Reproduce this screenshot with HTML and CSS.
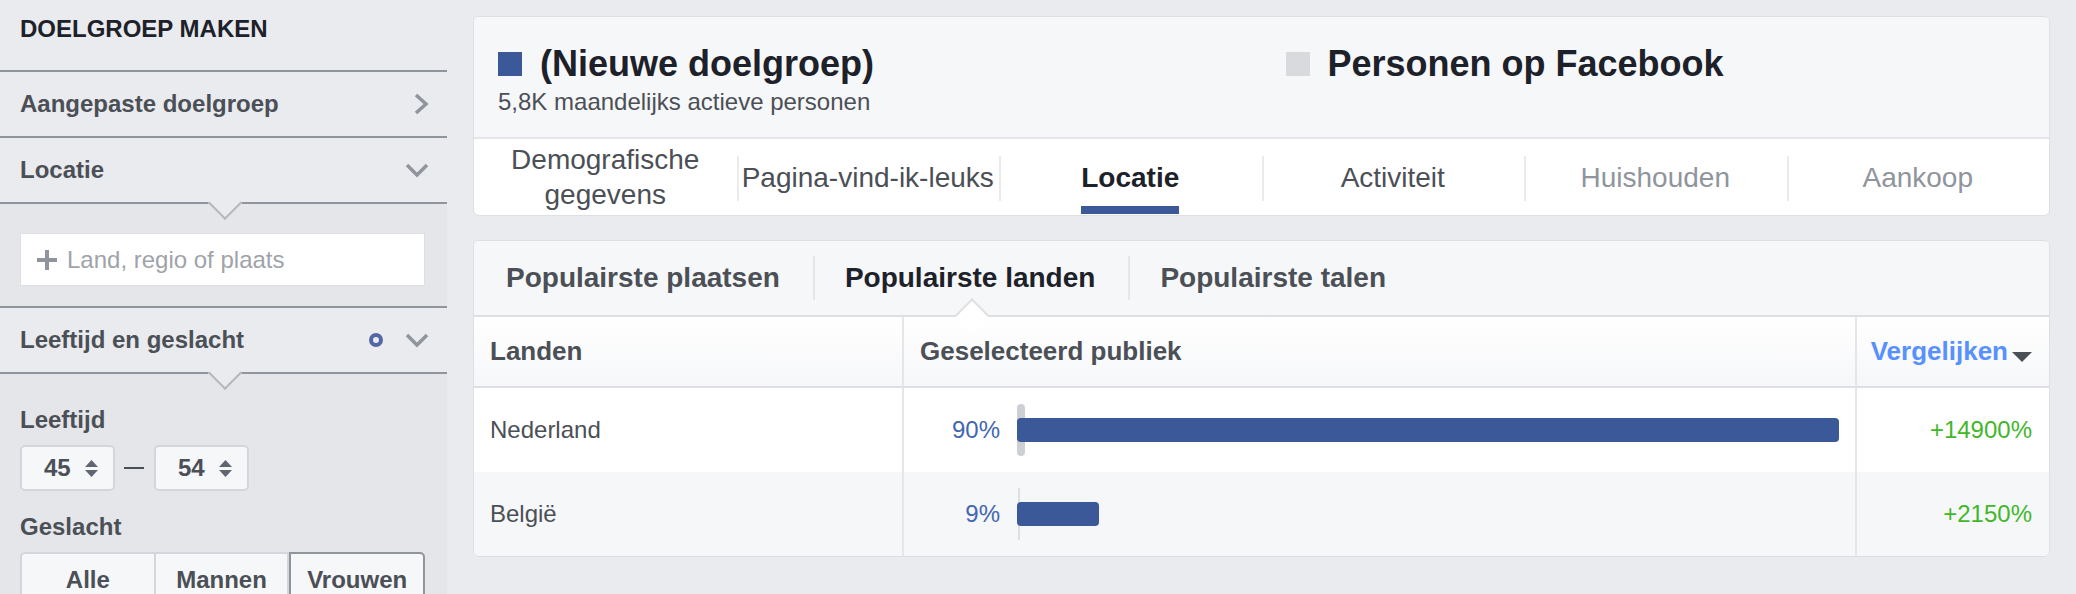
FILE: index.html
```html
<!DOCTYPE html>
<html lang="nl">
<head>
    <meta charset="UTF-8">
    <title>Doelgroepstatistieken - Locatie</title>
    <link rel="stylesheet" href="styles.css">
</head>
<body>
<div class="page">
    <!-- Sidebar: doelgroep maken -->
    <aside class="sidebar">
        <div class="side-title">DOELGROEP MAKEN</div>

        <div class="side-head">
            <span>Aangepaste doelgroep</span>
            <svg class="chev" width="15" height="22" viewBox="0 0 15 22"><polyline points="2,2 12,11 2,20" fill="none" stroke="#90949c" stroke-width="3.5"/></svg>
        </div>

        <div class="side-head open">
            <span>Locatie</span>
            <svg class="chev" width="24" height="15" viewBox="0 0 24 15"><polyline points="2,2 12,12 22,2" fill="none" stroke="#90949c" stroke-width="3.5"/></svg>
        </div>
        <div class="side-body">
            <div class="search">
                <svg width="20" height="20" viewBox="0 0 20 20"><rect x="8" y="0" width="4" height="20" fill="#90949c"/><rect x="0" y="8" width="20" height="4" fill="#90949c"/></svg>
                <span>Land, regio of plaats</span>
            </div>
        </div>

        <div class="side-head open">
            <span>Leeftijd en geslacht</span>
            <span class="head-icons">
                <span class="dot"></span>
                <svg class="chev" width="24" height="15" viewBox="0 0 24 15"><polyline points="2,2 12,12 22,2" fill="none" stroke="#90949c" stroke-width="3.5"/></svg>
            </span>
        </div>
        <div class="side-body age">
            <div class="field-label">Leeftijd</div>
            <div class="age-row">
                <div class="spin">
                    <span>45</span>
                    <svg width="13" height="17" viewBox="0 0 13 17"><polygon points="6.5,0 13,7 0,7" fill="#606770"/><polygon points="0,10 13,10 6.5,17" fill="#606770"/></svg>
                </div>
                <span class="dash"></span>
                <div class="spin">
                    <span>54</span>
                    <svg width="13" height="17" viewBox="0 0 13 17"><polygon points="6.5,0 13,7 0,7" fill="#606770"/><polygon points="0,10 13,10 6.5,17" fill="#606770"/></svg>
                </div>
            </div>
            <div class="field-label gap">Geslacht</div>
            <div class="seg">
                <div class="seg-item">Alle</div>
                <div class="seg-item">Mannen</div>
                <div class="seg-item selected">Vrouwen</div>
            </div>
        </div>
    </aside>

    <main class="main">
        <!-- Doelgroep samenvatting en tabs -->
        <section class="card">
            <div class="summary">
                <div class="aud">
                    <div class="aud-title"><span class="swatch"></span>(Nieuwe doelgroep)</div>
                    <div class="aud-sub">5,8K maandelijks actieve personen</div>
                </div>
                <div class="aud">
                    <div class="aud-title"><span class="swatch grey"></span>Personen op Facebook</div>
                </div>
            </div>
            <nav class="tabs">
                <div class="tab"><span>Demografische<br>gegevens</span></div>
                <div class="tab"><span>Pagina-vind-ik-leuks</span></div>
                <div class="tab active"><span>Locatie</span></div>
                <div class="tab"><span>Activiteit</span></div>
                <div class="tab muted"><span>Huishouden</span></div>
                <div class="tab muted"><span>Aankoop</span></div>
            </nav>
        </section>

        <!-- Locatie tabel -->
        <section class="card results">
            <div class="subtabs">
                <div class="subtab">Populairste plaatsen</div>
                <div class="subtab active">Populairste landen</div>
                <div class="subtab">Populairste talen</div>
            </div>
            <div class="grid">
                <div class="th">Landen</div>
                <div class="th col">Geselecteerd publiek</div>
                <div class="th col right compare">Vergelijken<span class="caret"></span></div>

                <div class="td">Nederland</div>
                <div class="td col bar-cell">
                    <span class="pct">90%</span>
                    <div class="track"><span class="axis wide"></span><span class="bar" style="width: 100%"></span></div>
                </div>
                <div class="td col right up">+14900%</div>

                <div class="td alt">België</div>
                <div class="td col bar-cell alt">
                    <span class="pct">9%</span>
                    <div class="track"><span class="axis"></span><span class="bar" style="width: 10%"></span></div>
                </div>
                <div class="td col right up alt">+2150%</div>
            </div>
        </section>
    </main>
</div>
</body>
</html>
```

FILE: styles.css
```css
/* General */
* {
    box-sizing: border-box;
}

body {
    margin: 0;
    background-color: #e9ebee;
    color: #4b4f56;
    font-family: "Liberation Sans", Arial, sans-serif;
    overflow: hidden;
}

.page {
    display: flex;
    height: 594px;
    overflow: hidden;
}

/* Sidebar */
.sidebar {
    width: 447px;
    flex: none;
    overflow: hidden;
}

.side-title {
    height: 72px;
    padding: 15px 20px 0;
    font-size: 24px;
    line-height: 28px;
    font-weight: bold;
    color: #1d2129;
    border-bottom: 2px solid #90949c;
}

.side-head {
    position: relative;
    height: 66px;
    display: flex;
    align-items: center;
    justify-content: space-between;
    padding: 0 18px 0 20px;
    font-size: 24px;
    font-weight: bold;
    border-bottom: 2px solid #90949c;
}

.side-head .chev {
    display: block;
}

/* little notch under an open section */
.side-head.open::after {
    content: "";
    position: absolute;
    left: 50%;
    bottom: -13px;
    width: 22px;
    height: 22px;
    margin-left: -11px;
    background-color: #e9ebee;
    border-right: 2px solid #b4b7bc;
    border-bottom: 2px solid #b4b7bc;
    transform: rotate(45deg);
}

.head-icons {
    display: flex;
    align-items: center;
    gap: 22px;
}

.dot {
    width: 14px;
    height: 14px;
    border: 4px solid #5466a4;
    border-radius: 50%;
}

.side-body {
    background-color: #e5e6e9;
    border-bottom: 2px solid #90949c;
    padding: 29px 22px 20px 20px;
}

.search {
    height: 53px;
    background-color: #ffffff;
    border: 1px solid #dddfe2;
    display: flex;
    align-items: center;
    gap: 10px;
    padding-left: 16px;
    font-size: 24px;
    color: #a0a3a9;
}

.side-body.age {
    padding-top: 32px;
    border-bottom: none;
}

.field-label {
    font-size: 24px;
    line-height: 28px;
    font-weight: bold;
}

.field-label.gap {
    margin-top: 22px;
}

.age-row {
    display: flex;
    align-items: center;
    margin-top: 11px;
}

.spin {
    width: 95px;
    height: 46px;
    display: flex;
    align-items: center;
    gap: 14px;
    padding-left: 22px;
    background-color: #f6f7f9;
    border: 2px solid #d3d6db;
    border-radius: 5px;
    font-size: 24px;
    font-weight: bold;
}

.dash {
    width: 20px;
    height: 2px;
    margin: 0 10px 0 9px;
    background-color: #4b4f56;
}

.seg {
    display: flex;
    margin-top: 11px;
}

.seg-item {
    flex: 1;
    height: 56px;
    display: flex;
    align-items: center;
    justify-content: center;
    font-size: 24px;
    font-weight: bold;
    background-color: #f6f7f9;
    border: 2px solid #d3d6db;
    border-left-width: 0;
}

.seg-item:first-child {
    border-left-width: 2px;
    border-radius: 5px 0 0 0;
}

.seg-item.selected {
    border: 2px solid #90949c;
    border-radius: 0 5px 0 0;
}

/* Main area */
.main {
    flex: 1;
    padding: 16px 26px 0;
}

.card {
    background-color: #ffffff;
    border: 1px solid #dddfe2;
    border-radius: 6px;
    overflow: hidden;
}

.summary {
    display: flex;
    height: 122px;
    background-color: #f6f7f9;
    border-bottom: 2px solid #e4e6ea;
}

.aud {
    flex: 1;
    padding: 25px 24px 0;
}

.aud-title {
    display: flex;
    align-items: center;
    gap: 18px;
    font-size: 36px;
    line-height: 44px;
    font-weight: bold;
    color: #1d2129;
}

.swatch {
    width: 24px;
    height: 24px;
    background-color: #3b5998;
}

.swatch.grey {
    background-color: #d8dade;
}

.aud-sub {
    margin-top: 2px;
    font-size: 24px;
    line-height: 28px;
}

.tabs {
    display: flex;
    height: 76px;
}

.tab {
    flex: 1;
    position: relative;
    display: flex;
    align-items: center;
    justify-content: center;
    text-align: center;
    font-size: 28px;
    line-height: 35px;
}

.tab span {
    display: block;
    position: relative;
}

.tab + .tab::before {
    content: "";
    position: absolute;
    left: 0;
    top: 17px;
    bottom: 14px;
    width: 2px;
    background-color: #e9ebee;
}

.tab.active {
    font-weight: bold;
    color: #1d2129;
}

.tab.active span::after {
    content: "";
    position: absolute;
    left: 0;
    right: 0;
    bottom: -19px;
    height: 8px;
    background-color: #3b5998;
}

.tab.muted {
    color: #90949c;
}

/* Results card */
.results {
    margin-top: 24px;
}

.subtabs {
    display: flex;
    height: 76px;
    background-color: #f6f7f9;
    border-bottom: 2px solid #dddfe2;
}

.subtab {
    position: relative;
    display: flex;
    align-items: center;
    padding: 0 33px 0 32px;
    font-size: 28px;
    font-weight: bold;
}

.subtab + .subtab::before {
    content: "";
    position: absolute;
    left: 0;
    top: 15px;
    bottom: 15px;
    width: 2px;
    background-color: #e4e6ea;
}

.subtab.active {
    color: #1d2129;
}

.subtab.active::after {
    content: "";
    position: absolute;
    left: 50%;
    bottom: -12px;
    width: 22px;
    height: 22px;
    margin-left: -11px;
    background-color: #ffffff;
    border-top: 2px solid #dddfe2;
    border-left: 2px solid #dddfe2;
    transform: rotate(45deg);
    z-index: 1;
}

.grid {
    display: grid;
    grid-template-columns: 428px 1fr 194px;
}

.th {
    height: 71px;
    display: flex;
    align-items: center;
    padding-left: 16px;
    font-size: 26px;
    font-weight: bold;
    background: linear-gradient(#ffffff, #f6f7f9);
    border-bottom: 2px solid #dddfe2;
}

.td {
    height: 84px;
    display: flex;
    align-items: center;
    padding-left: 16px;
    font-size: 24px;
    background-color: #ffffff;
}

.td.alt {
    background-color: #f6f7f9;
}

.col {
    border-left: 2px solid #e4e6ea;
}

.right {
    justify-content: flex-end;
    padding-left: 0;
    padding-right: 17px;
}

.compare {
    color: #5890ff;
}

.caret {
    width: 0;
    height: 0;
    margin: 10px 0 0 4px;
    border-left: 10px solid transparent;
    border-right: 10px solid transparent;
    border-top: 10px solid #4b4f56;
}

.bar-cell {
    padding-left: 0;
    padding-right: 16px;
}

.pct {
    width: 96px;
    flex: none;
    text-align: right;
    color: #4267b2;
}

.track {
    flex: 1;
    position: relative;
    height: 52px;
    margin-left: 17px;
    display: flex;
    align-items: center;
}

.axis {
    position: absolute;
    left: 1px;
    top: 0;
    bottom: 0;
    width: 2px;
    background-color: #dddfe2;
}

.axis.wide {
    left: 0;
    width: 8px;
    border-radius: 4px;
    background-color: #ccd0d5;
}

.bar {
    position: relative;
    height: 24px;
    border-radius: 4px;
    background-color: #3b5998;
}

.up {
    color: #42b72a;
}
```
